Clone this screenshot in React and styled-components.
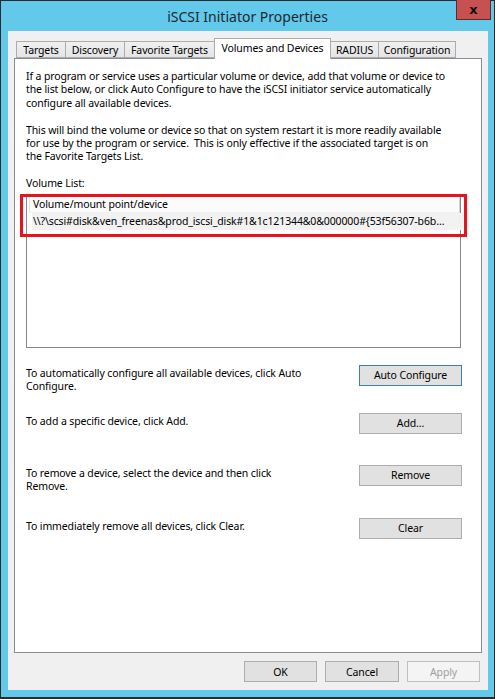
import styled, { createGlobalStyle } from "styled-components";

const GlobalStyle = createGlobalStyle`
    html, body {
        margin: 0;
        padding: 0;
        background: #2b2b2b;
    }
    * {
        box-sizing: border-box;
    }
`

const Window = styled.div`
    width: 495px;
    height: 699px;
    display: flex;
    flex-direction: column;
    background: #62c9ea;
    border: 1px solid #2b2b2b;
    border-bottom-width: 2px;
    font-family: 'Noto Sans', 'Open Sans', sans-serif;
    font-size: 10.5px;
    letter-spacing: -0.12px;
    color: #000000;
`

const TitleBar = styled.div`
    display: grid;
    grid-template-columns: 1fr auto 1fr;
    height: 30px;
    flex-shrink: 0;
`

const Title = styled.div`
    grid-column: 2;
    align-self: center;
    font-size: 14px;
    letter-spacing: 0;
    color: #1c2833;
`

const CloseButton = styled.div`
    grid-column: 3;
    justify-self: end;
    width: 35px;
    height: 20px;
    margin-top: -1px;
    margin-right: 3px;
    background: #c75050;
    border: 1px solid #5e2b2b;
    border-top: none;
    display: flex;
    align-items: center;
    justify-content: center;
    font-family: 'DejaVu Sans', sans-serif;
    font-weight: bold;
    font-size: 13px;
    color: #111111;
`

const Client = styled.div`
    flex: 1;
    margin: 0 6px 7px 7px;
    background: #f0f0f0;
    padding: 7px 6px 0 6px;
    display: flex;
    flex-direction: column;
`

const TabRow = styled.div`
    display: flex;
    align-items: flex-end;
    height: 20px;
    margin-left: 2px;
    position: relative;
    z-index: 1;
`

const Tab = styled.div`
    width: ${p => p.$w}px;
    height: ${p => (p.$active ? 21 : 17)}px;
    margin-bottom: ${p => (p.$active ? -1 : 0)}px;
    display: flex;
    align-items: ${p => (p.$active ? "flex-start" : "center")};
    padding-top: ${p => (p.$active ? 2 : 0)}px;
    justify-content: center;
    white-space: nowrap;
    border: 1px solid #acacac;
    border-bottom: ${p => (p.$active ? "none" : "1px solid #acacac")};
    margin-left: ${p => (p.$first ? 0 : -1)}px;
    background: ${p => (p.$active ? "#ffffff" : "linear-gradient(#f0f0f0, #e5e5e5)")};
`

const Panel = styled.div`
    height: 595px;
    background: #ffffff;
    border: 1px solid #898c95;
    padding: 11px 20px 0 11px;
    display: flex;
    flex-direction: column;
`

const Para = styled.p`
    margin: 0 0 ${p => p.$gap}px 0;
    line-height: 13.4px;
    white-space: nowrap;
`

const ListWrap = styled.div`
    position: relative;
`

const ListBox = styled.div`
    height: 153px;
    border: 1px solid #828790;
    background: #ffffff;
    padding: 1px 2px 0 2px;
`

const HeaderRow = styled.div`
    display: flex;
    height: 16px;
    width: 431px;
    align-items: center;
    background: #fbfbfb;
    border-left: 1px solid #e5e5e5;
    border-right: 1px solid #d5d5d5;
    border-bottom: 1px solid #f0f0f0;
    padding-left: 3px;
`

const ItemRow = styled.div`
    height: 17px;
    width: 431px;
    margin-left: 3px;
    display: flex;
    align-items: center;
    background: #f2f2f2;
    padding-left: 1px;
    white-space: nowrap;
    overflow: hidden;
`

const Highlight = styled.div`
    position: absolute;
    top: -1px;
    left: -6px;
    right: -6px;
    height: 43px;
    border: 3px solid #e8141d;
    pointer-events: none;
`

const Actions = styled.div`
    display: flex;
    flex-direction: column;
    margin-top: 17px;
`

const ActionRow = styled.div`
    display: flex;
    justify-content: space-between;
    align-items: flex-start;
    height: ${p => p.$h}px;
`

const ActionText = styled.div`
    line-height: 13.4px;
    padding-top: 2px;
    white-space: nowrap;
`

const Button = styled.div`
    width: ${p => p.$w || 103}px;
    height: 21px;
    flex-shrink: 0;
    display: flex;
    align-items: center;
    justify-content: center;
    background: ${p => (p.$disabled ? "#f4f4f4" : "#e1e1e1")};
    border: 1px solid ${p => (p.$default ? "#3c7fb1" : p.$disabled ? "#bfbfbf" : "#adadad")};
    color: ${p => (p.$disabled ? "#a0a0a0" : "#000000")};
    margin-right: ${p => p.$mr || 0}px;
`

const Footer = styled.div`
    display: flex;
    justify-content: flex-end;
    gap: 8px;
    padding: 8px 2px 0 0;
`

const tabs = [
    { label: "Targets", w: 50 },
    { label: "Discovery", w: 60 },
    { label: "Favorite Targets", w: 91 },
    { label: "Volumes and Devices", w: 117, active: true },
    { label: "RADIUS", w: 49 },
    { label: "Configuration", w: 78 },
]

const App = () => {
    return (
        <>
            <GlobalStyle />
            <Window>
                <TitleBar>
                    <Title>iSCSI Initiator Properties</Title>
                    <CloseButton>x</CloseButton>
                </TitleBar>
                <Client>
                    <TabRow>
                        {tabs.map((t, i) => (
                            <Tab key={t.label} $w={t.w} $active={t.active} $first={i === 0}>
                                {t.label}
                            </Tab>
                        ))}
                    </TabRow>
                    <Panel>
                        <Para $gap={13.4}>
                            If a program or service uses a particular volume or device, add that volume or device to<br />
                            the list below, or click Auto Configure to have the iSCSI initiator service automatically<br />
                            configure all available devices.
                        </Para>
                        <Para $gap={13.4}>
                            This will bind the volume or device so that on system restart it is more readily available<br />
                            for use by the program or service.&nbsp; This is only effective if the associated target is on<br />
                            the Favorite Targets List.
                        </Para>
                        <Para $gap={4}>Volume List:</Para>
                        <ListWrap>
                            <ListBox>
                                <HeaderRow>Volume/mount point/device</HeaderRow>
                                <ItemRow>
                                    {"\\\\?\\scsi#disk&ven_freenas&prod_iscsi_disk#1&1c121344&0&000000#{53f56307-b6b\u2026"}
                                </ItemRow>
                            </ListBox>
                            <Highlight />
                        </ListWrap>
                        <Actions>
                            <ActionRow $h={48}>
                                <ActionText>
                                    To automatically configure all available devices, click Auto<br />
                                    Configure.
                                </ActionText>
                                <Button $default $mr={-1}>Auto Configure</Button>
                            </ActionRow>
                            <ActionRow $h={52}>
                                <ActionText>To add a specific device, click Add.</ActionText>
                                <Button $mr={-1}>Add...</Button>
                            </ActionRow>
                            <ActionRow $h={53}>
                                <ActionText>
                                    To remove a device, select the device and then click<br />
                                    Remove.
                                </ActionText>
                                <Button $mr={-1}>Remove</Button>
                            </ActionRow>
                            <ActionRow $h={30}>
                                <ActionText>To immediately remove all devices, click Clear.</ActionText>
                                <Button $mr={-1}>Clear</Button>
                            </ActionRow>
                        </Actions>
                    </Panel>
                    <Footer>
                        <Button $w={73}>OK</Button>
                        <Button $w={74}>Cancel</Button>
                        <Button $w={73} $disabled>Apply</Button>
                    </Footer>
                </Client>
            </Window>
        </>
    )
}

export default App
